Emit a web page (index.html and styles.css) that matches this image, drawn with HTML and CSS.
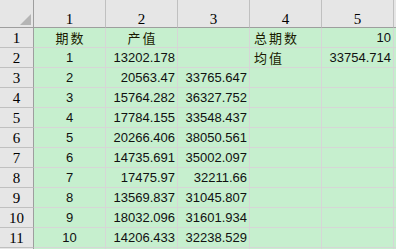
FILE: index.html
```html
<!DOCTYPE html>
<html lang="zh">
<head>
<meta charset="utf-8">
<link rel="stylesheet" href="styles.css">
</head>
<body>
<div class="sheet">
  <div class="corner"><svg width="11" height="11" viewBox="0 0 11 11"><polygon points="11,0 11,11 0,11" fill="#b5b5b5"/></svg></div>
  <div class="ch">1</div><div class="ch">2</div><div class="ch">3</div><div class="ch">4</div><div class="ch">5</div><div class="ch"></div>

  <div class="rh">1</div><div class="c cn zh">期数</div><div class="c cn zh">产值</div><div class="c"></div><div class="c zh lt">总期数</div><div class="c r">10</div><div class="c"></div>
  <div class="rh">2</div><div class="c cn">1</div><div class="c r">13202.178</div><div class="c"></div><div class="c zh lt">均值</div><div class="c r">33754.714</div><div class="c"></div>
  <div class="rh">3</div><div class="c cn">2</div><div class="c r">20563.47</div><div class="c r">33765.647</div><div class="c"></div><div class="c"></div><div class="c"></div>
  <div class="rh">4</div><div class="c cn">3</div><div class="c r">15764.282</div><div class="c r">36327.752</div><div class="c"></div><div class="c"></div><div class="c"></div>
  <div class="rh">5</div><div class="c cn">4</div><div class="c r">17784.155</div><div class="c r">33548.437</div><div class="c"></div><div class="c"></div><div class="c"></div>
  <div class="rh">6</div><div class="c cn">5</div><div class="c r">20266.406</div><div class="c r">38050.561</div><div class="c"></div><div class="c"></div><div class="c"></div>
  <div class="rh">7</div><div class="c cn">6</div><div class="c r">14735.691</div><div class="c r">35002.097</div><div class="c"></div><div class="c"></div><div class="c"></div>
  <div class="rh">8</div><div class="c cn">7</div><div class="c r">17475.97</div><div class="c r">32211.66</div><div class="c"></div><div class="c"></div><div class="c"></div>
  <div class="rh">9</div><div class="c cn">8</div><div class="c r">13569.837</div><div class="c r">31045.807</div><div class="c"></div><div class="c"></div><div class="c"></div>
  <div class="rh">10</div><div class="c cn">9</div><div class="c r">18032.096</div><div class="c r">31601.934</div><div class="c"></div><div class="c"></div><div class="c"></div>
  <div class="rh">11</div><div class="c cn">10</div><div class="c r">14206.433</div><div class="c r">32238.529</div><div class="c"></div><div class="c"></div><div class="c"></div>
  <div class="rh"></div><div class="c"></div><div class="c"></div><div class="c"></div><div class="c"></div><div class="c"></div><div class="c"></div>
</div>
</body>
</html>
```
FILE: styles.css
```css
html, body {
  margin: 0;
  padding: 0;
  overflow: hidden;
  background: #ffffff;
}
.sheet {
  display: grid;
  grid-template-columns: 34px repeat(5, 72px) 40px;
  grid-template-rows: 28px repeat(12, 20px);
  width: 396px;
  height: 249px;
  overflow: hidden;
}
.sheet > div {
  box-sizing: border-box;
  border-right: 1px solid #d6d6d6;
  border-bottom: 1px solid #d6d6d6;
  white-space: nowrap;
  overflow: hidden;
}
.corner {
  background: #e6e6e6;
  border-right-color: #9e9e9e !important;
  border-bottom-color: #9e9e9e !important;
  display: flex;
  justify-content: flex-end;
  align-items: flex-end;
  padding: 0 2px 2px 0;
}
.corner svg { display: block; }
.ch {
  background: #e6e6e6;
  border-right-color: #c0c0c0 !important;
  border-bottom-color: #9e9e9e !important;
  font-family: "Liberation Serif", "DejaVu Serif", serif;
  font-size: 15px;
  line-height: 16px;
  padding-top: 11px;
  text-align: center;
  color: #000;
}
.rh {
  background: #e6e6e6;
  border-right-color: #9e9e9e !important;
  border-bottom-color: #c0c0c0 !important;
  font-family: "Liberation Serif", "DejaVu Serif", serif;
  font-size: 15px;
  line-height: 18px;
  padding-top: 1px;
  text-align: center;
  color: #000;
}
.c {
  background: #c6efce;
  font-family: "Liberation Sans", Arial, sans-serif;
  font-size: 13px;
  line-height: 18px;
  padding-top: 1px;
  color: #111;
}
.r { text-align: right; padding-right: 2px; }
.cn { text-align: center; }
.zh {
  font-family: "Noto Sans CJK SC", "Noto Sans", sans-serif;
  font-size: 13px;
  letter-spacing: 2px;
  line-height: 18px;
  color: #1a1a00;
}
.cn.zh { padding-left: 2px; }
.lt { padding-left: 4px; }
```
